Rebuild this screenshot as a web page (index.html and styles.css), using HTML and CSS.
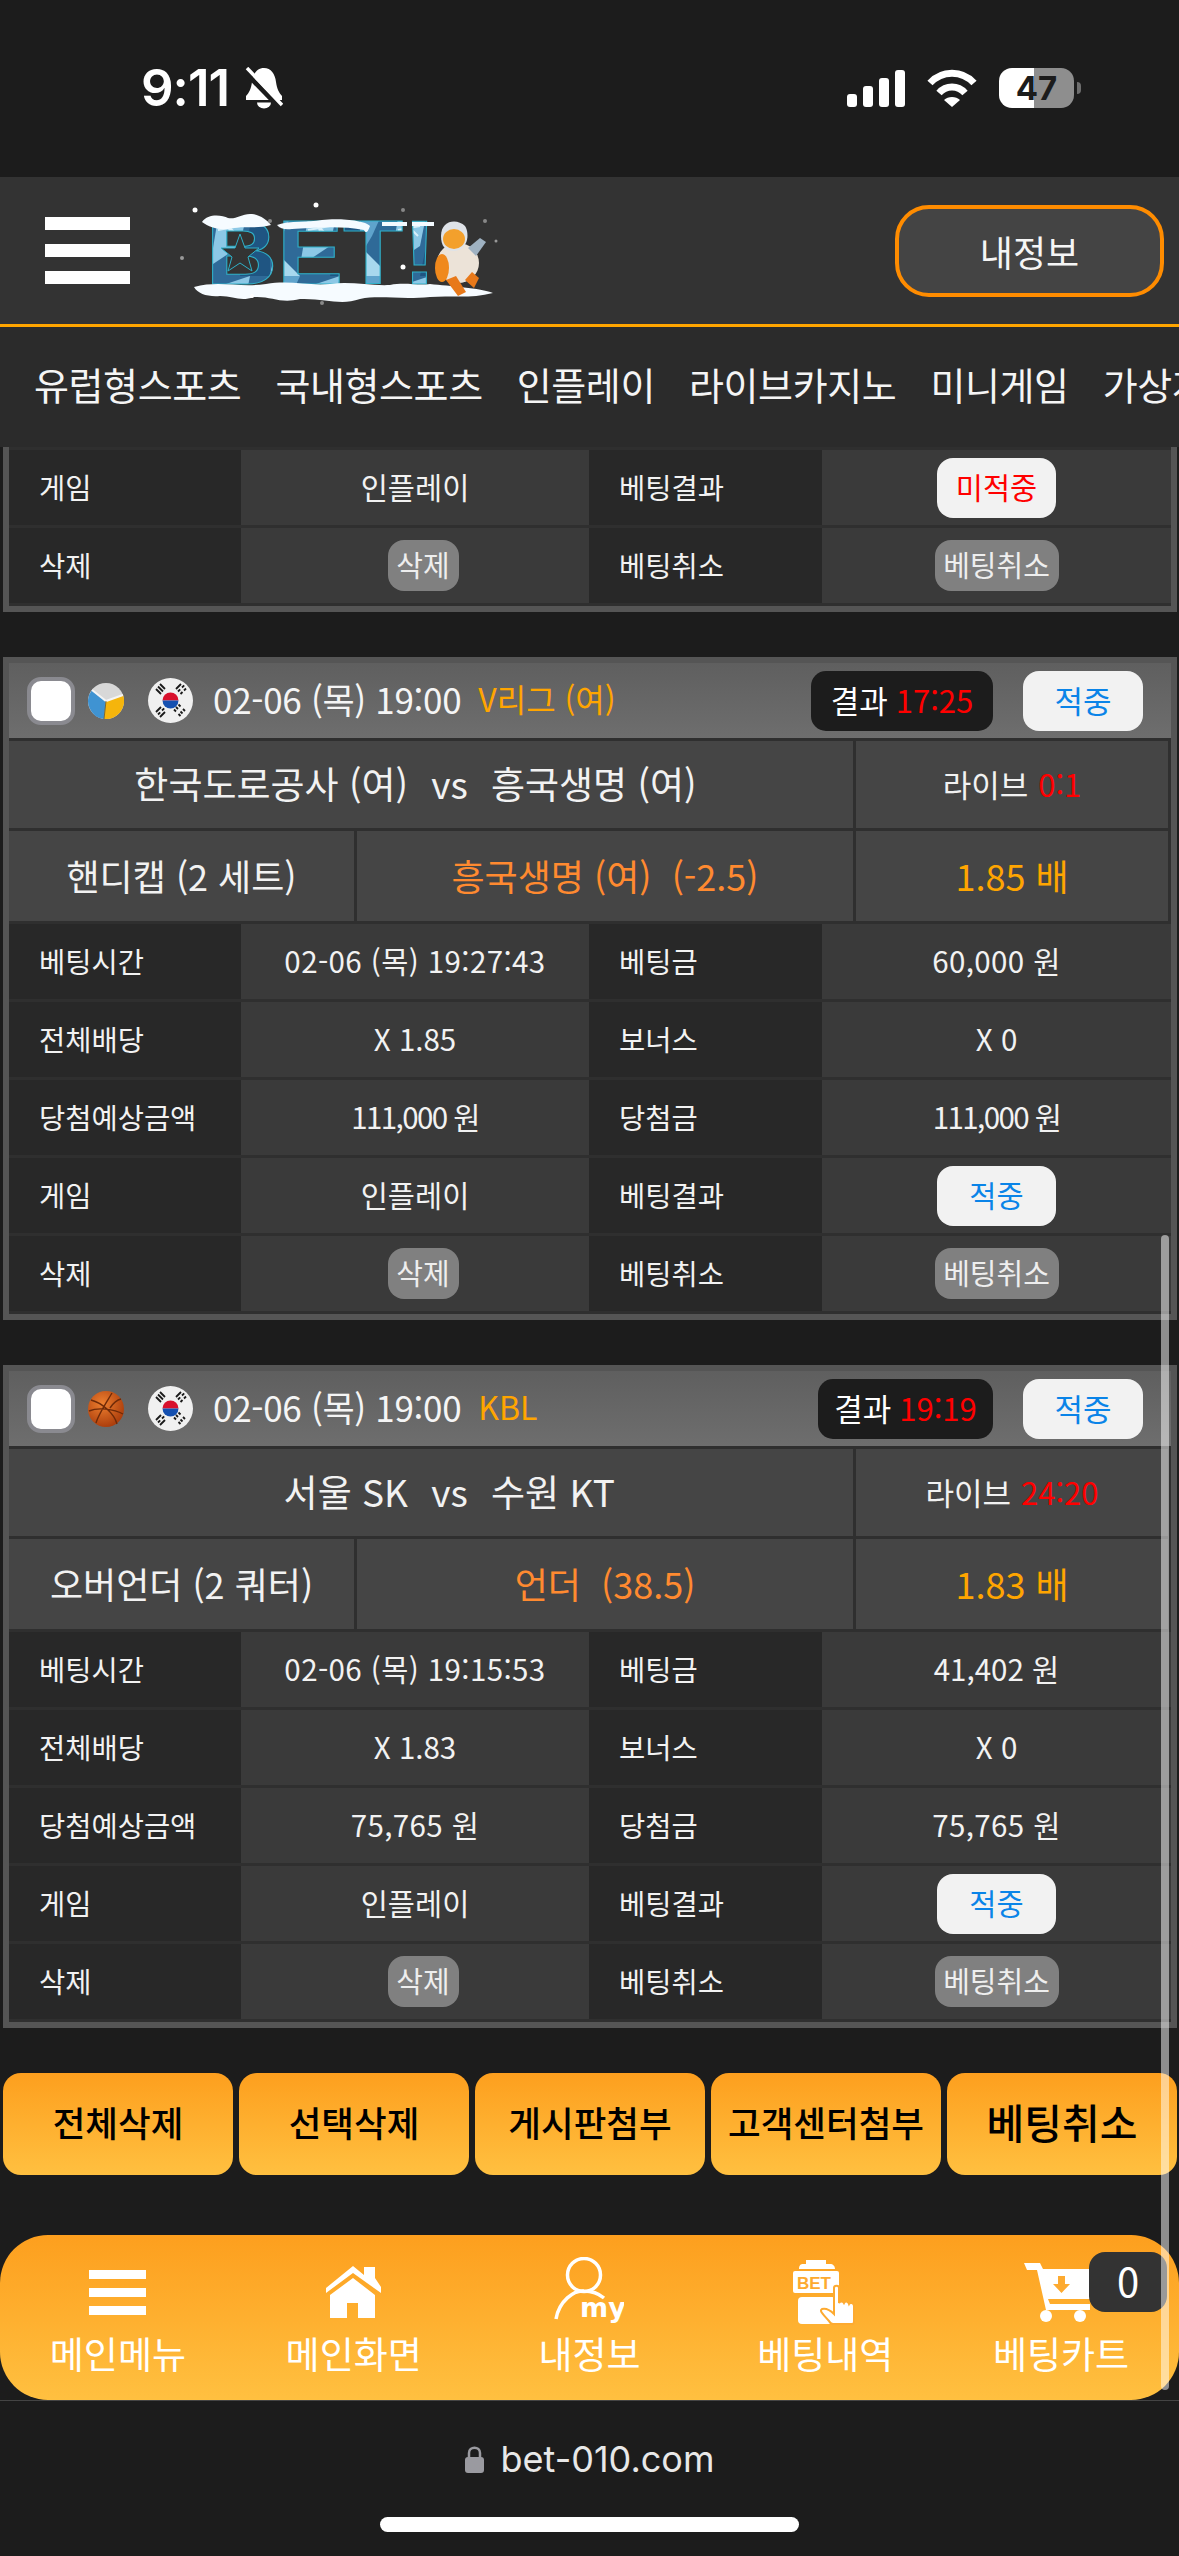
FILE: index.html
```html
<!DOCTYPE html>
<html lang="ko">
<head>
<meta charset="utf-8">
<title>BET</title>
<link rel="stylesheet" href="styles.css">
</head>
<body>
<svg class="defs" width="0" height="0" aria-hidden="true">
  <defs>
    <symbol id="flag" viewBox="0 0 45 45">
      <circle cx="22.5" cy="22.5" r="22.5" fill="#f0f0f0"/>
      <path d="M14.5 22.5a8 8 0 0 1 16 0z" fill="#d8102c"/>
      <path d="M14.5 22.5a8 8 0 0 0 16 0z" fill="#1550b0"/>
      <g stroke="#1a1a1a" stroke-width="1.8" fill="none">
        <path d="M8 11l5 5M10 8.500l5 5M12 6l5 5"/>
        <path d="M28 11l5-5M30 13.500l2.200-2.200M34 9.500l2.200-2.200M32.500 16l2-2M36 12.500l2-2"/>
        <path d="M8 34l5-5M10 36.500l2.200-2.200M14 32.500l2.200-2.200M12 39l5-5"/>
        <path d="M28 29l2 2M32.500 33.500l2 2M30.500 26.500l2 2M35 31l2 2M26 31.500l2 2M30.500 36l2 2"/>
      </g>
    </symbol>
    <symbol id="volley" viewBox="0 0 36 36">
      <circle cx="18" cy="18" r="18" fill="#d8d8d8"/>
      <path d="M18 18L16 36A18 18 0 0 0 35 12z" fill="#f5b50c"/>
      <path d="M18 18L16 36A18 18 0 0 1 4 7z" fill="#3f93d2"/>
      <path d="M4 7L18 18 35 12" fill="none" stroke="#f4f4f4" stroke-width="2"/>
      <path d="M18 18L16 36" stroke="#7d6a30" stroke-width="1"/>
    </symbol>
    <radialGradient id="bballfill" cx="40%" cy="35%" r="70%">
      <stop offset="0" stop-color="#ee8030"/>
      <stop offset="1" stop-color="#a83a0a"/>
    </radialGradient>
    <symbol id="bball" viewBox="0 0 36 36">
      <circle cx="18" cy="18" r="18" fill="url(#bballfill)"/>
      <path d="M3 9C14 12 26 22 29 33M24 2C18 12 10 24 8 32M1 20C10 16 26 18 35 23M33 8C28 9 24 14 22 17" fill="none" stroke="#6e2a08" stroke-width="1.400"/>
    </symbol>
  </defs>
</svg>

<div class="screen">
  <div class="status">
    <div class="status-left">
      <span class="clock">9:11</span>
      <svg class="bell" width="39" height="42" viewBox="0 0 39 42">
        <path d="M20 1C27 1 31 7 32 15C33 22 35 26 38 29V33H2V29C5 26 7 22 8 15C9 7 13 1 20 1Z" fill="#fff"/>
        <path d="M13 35.500A7 6 0 0 0 27 35.500Z" fill="#fff"/>
        <path d="M1 5L35 40" stroke="#1c1c1c" stroke-width="5"/>
        <path d="M3 1L38 38" stroke="#fff" stroke-width="3.500"/>
      </svg>
    </div>
    <div class="status-right">
      <svg width="58" height="37" viewBox="0 0 58 37" fill="#fff">
        <rect x="0" y="24" width="10" height="13" rx="3"/>
        <rect x="16" y="16" width="10" height="21" rx="3"/>
        <rect x="32" y="8" width="10" height="29" rx="3"/>
        <rect x="48" y="0" width="10" height="37" rx="3"/>
      </svg>
      <svg width="50" height="38" viewBox="0 0 50 38">
        <path d="M3 14C15 1 35 1 47 14" fill="none" stroke="#fff" stroke-width="7"/>
        <path d="M12 24C19 16 31 16 38 24" fill="none" stroke="#fff" stroke-width="7"/>
        <path d="M25 38L17 31C21 27 29 27 33 31Z" fill="#fff"/>
      </svg>
      <span class="battery">47</span>
    </div>
  </div>

  <header class="topbar">
    <div class="burger"><i></i><i></i><i></i></div>
    <svg class="logo" width="320" height="110" viewBox="0 0 320 110">
      <defs>
        <pattern id="frost" width="90" height="80" patternUnits="userSpaceOnUse">
          <rect width="90" height="80" fill="#2f6a98"/>
          <path d="M0 0L30 0 12 40 0 60Z" fill="#5fa3cc"/>
          <path d="M40 10L70 0 60 50 30 70Z" fill="#8cc8e6"/>
          <path d="M70 30L90 20 90 80 60 80Z" fill="#1f5582"/>
          <path d="M5 55L30 80 0 80Z" fill="#a8d8ee"/>
          <path d="M46 20L52 44M38 34L60 30M42 24L58 40" stroke="#d8f0fa" stroke-width="2"/>
        </pattern>
      </defs>
      <text class="logo-text" x="26" y="88" textLength="230" lengthAdjust="spacingAndGlyphs" fill="url(#frost)" stroke="#2fb0c8" stroke-width="1">BET!</text>
      <path d="M60 38L65 52 79 52 68 61 72 75 60 67 48 75 52 61 41 52 55 52Z" fill="#333" stroke="#2fb0c8" stroke-width="1"/>
      <path d="M22 26C28 17 42 19 48 22C56 24 62 17 72 18C80 19 87 24 91 29C78 33 64 30 52 32C42 35 30 32 22 26Z" fill="#f6fbff"/>
      <path d="M97 29C110 24 128 27 142 24C158 22 185 24 190 30C188 36 186 38 184 34C160 29 130 32 112 33C106 34 100 33 97 29Z" fill="#f4faff"/>
      <path d="M202 26H227V30H202ZM232 26H254V30H232Z" fill="#f4faff"/>
      <path d="M14 91C40 84 58 92 86 88C110 84 128 90 150 88C170 85 190 90 210 89C226 86 238 90 250 88C270 90 300 92 313 97C290 103 270 99 250 101C220 104 200 99 180 103C160 110 145 102 120 103C100 108 92 100 74 101C60 106 54 100 40 100C28 101 18 98 14 91Z" fill="#f6fbff"/>
      <ellipse cx="278" cy="67" rx="21" ry="20" fill="#ece3d8"/>
      <ellipse cx="262" cy="72" rx="7" ry="14" fill="#f0891c"/>
      <path d="M266 84L278 100 286 96 276 80Z" fill="#e8791a"/>
      <path d="M285 84L294 92 299 82 292 76Z" fill="#e8791a"/>
      <path d="M261 40C261 24 277 22 285 30C290 38 288 54 274 55C265 55 261 50 261 40Z" fill="#dfe3e8"/>
      <ellipse cx="274" cy="43" rx="11" ry="10" fill="#f3a02c"/>
      <path d="M288 52L300 42 306 46 296 60Z" fill="#9fb2c2"/>
      <circle cx="15" cy="14" r="2.500" fill="#fff"/>
      <circle cx="136" cy="9" r="2.500" fill="#fff"/>
      <circle cx="223" cy="71" r="2.500" fill="#fff"/>
      <circle cx="72" cy="100" r="2" fill="#fff"/>
      <circle cx="2" cy="62" r="2" fill="#999"/>
      <circle cx="223" cy="14" r="2" fill="#888"/>
      <circle cx="305" cy="25" r="2" fill="#888"/>
      <circle cx="316" cy="45" r="1.500" fill="#999"/>
      <circle cx="142" cy="107" r="2" fill="#888"/>
      <circle cx="90" cy="25" r="2" fill="#888"/>
    </svg>
    <button class="myinfo">내정보</button>
  </header>

  <nav class="gnb">
    <span>유럽형스포츠</span><span>국내형스포츠</span><span>인플레이</span><span>라이브카지노</span><span>미니게임</span><span>가상게임</span>
  </nav>

  <main class="list">
    <section class="card card-tail">
      <div class="data">
        <div class="k">게임</div><div class="v">인플레이</div><div class="k">베팅결과</div><div class="v"><span class="result lose">미적중</span></div>
        <div class="k">삭제</div><div class="v"><span class="mini mini-del">삭제</span></div><div class="k">베팅취소</div><div class="v"><span class="mini">베팅취소</span></div>
      </div>
    </section>

    <section class="card">
      <div class="card-head">
        <span class="check"></span>
        <svg class="ball" width="36" height="36"><use href="#volley"/></svg>
        <svg class="flag" width="45" height="45"><use href="#flag"/></svg>
        <span class="date">02-06 (목) 19:00</span>
        <span class="league">V리그 (여)</span>
        <span class="score">결과 <b>17:25</b></span>
        <span class="badge-win">적중</span>
      </div>
      <div class="match">
        <div class="teams"><span class="home">한국도로공사 (여)</span><span class="vs">vs</span><span>흥국생명 (여)</span></div>
        <div class="live">라이브 <b>0:1</b></div>
      </div>
      <div class="pick">
        <div class="market">핸디캡 (2 세트)</div>
        <div class="choice">흥국생명 (여) &nbsp;(-2.5)</div>
        <div class="odds">1.85 배</div>
      </div>
      <div class="data">
        <div class="k">베팅시간</div><div class="v wide">02-06 (목) 19:27:43</div><div class="k">베팅금</div><div class="v wide">60,000 원</div>
        <div class="k">전체배당</div><div class="v">X 1.85</div><div class="k">보너스</div><div class="v">X 0</div>
        <div class="k">당첨예상금액</div><div class="v tight">111,000 원</div><div class="k">당첨금</div><div class="v tight">111,000 원</div>
        <div class="k">게임</div><div class="v">인플레이</div><div class="k">베팅결과</div><div class="v"><span class="result win">적중</span></div>
        <div class="k">삭제</div><div class="v"><span class="mini mini-del">삭제</span></div><div class="k">베팅취소</div><div class="v"><span class="mini">베팅취소</span></div>
      </div>
    </section>

    <section class="card">
      <div class="card-head">
        <span class="check"></span>
        <svg class="ball" width="36" height="36"><use href="#bball"/></svg>
        <svg class="flag" width="45" height="45"><use href="#flag"/></svg>
        <span class="date">02-06 (목) 19:00</span>
        <span class="league">KBL</span>
        <span class="score narrow">결과 <b>19:19</b></span>
        <span class="badge-win">적중</span>
      </div>
      <div class="match">
        <div class="teams"><span class="home">서울 SK</span><span class="vs">vs</span><span>수원 KT</span></div>
        <div class="live">라이브 <b>24:20</b></div>
      </div>
      <div class="pick">
        <div class="market">오버언더 (2 쿼터)</div>
        <div class="choice">언더 &nbsp;(38.5)</div>
        <div class="odds">1.83 배</div>
      </div>
      <div class="data">
        <div class="k">베팅시간</div><div class="v wide">02-06 (목) 19:15:53</div><div class="k">베팅금</div><div class="v">41,402 원</div>
        <div class="k">전체배당</div><div class="v">X 1.83</div><div class="k">보너스</div><div class="v">X 0</div>
        <div class="k">당첨예상금액</div><div class="v wide">75,765 원</div><div class="k">당첨금</div><div class="v wide">75,765 원</div>
        <div class="k">게임</div><div class="v">인플레이</div><div class="k">베팅결과</div><div class="v"><span class="result win">적중</span></div>
        <div class="k">삭제</div><div class="v"><span class="mini mini-del">삭제</span></div><div class="k">베팅취소</div><div class="v"><span class="mini">베팅취소</span></div>
      </div>
    </section>

    <div class="actions">
      <button class="act">전체삭제</button>
      <button class="act">선택삭제</button>
      <button class="act">게시판첨부</button>
      <button class="act">고객센터첨부</button>
      <button class="act act-big">베팅취소</button>
    </div>
  </main>

  <nav class="tabbar">
    <div class="tab">
      <span class="tab-icon"><span class="tab-burger"><i></i><i></i><i></i></span></span>
      <span>메인메뉴</span>
    </div>
    <div class="tab">
      <span class="tab-icon">
        <svg width="57" height="52" viewBox="0 0 57 52" fill="#fff">
          <path d="M39 1H50V12L56 21V27L28 7 1 27V22L28 0 39 9Z"/>
          <path d="M28 12L50 29V52H33V37H22V52H5V29Z"/>
        </svg>
      </span>
      <span>메인화면</span>
    </div>
    <div class="tab">
      <span class="tab-icon">
        <svg width="70" height="70" viewBox="0 0 70 70">
          <circle cx="30" cy="18" r="16.500" fill="none" stroke="#fff" stroke-width="3.500"/>
          <path d="M2 62C5 44 20 33 30 34C37 34 44 36 50 41" fill="none" stroke="#fff" stroke-width="3.500"/>
          <text class="icon-my" x="26" y="60">my</text>
        </svg>
      </span>
      <span>내정보</span>
    </div>
    <div class="tab">
      <span class="tab-icon">
        <svg width="64" height="66" viewBox="0 0 64 66">
          <path d="M6 10C6 6 8 5 10 5H13V1H33V5H37C40 5 42 7 42 10Z" fill="#fff"/>
          <rect x="0" y="12" width="46" height="22" rx="2" fill="#fff"/>
          <text class="icon-bet" x="4" y="30">BET</text>
          <rect x="5" y="38" width="38" height="27" rx="4" fill="#fff"/>
          <path d="M36 62C30 55 26 52 29 50C33 49 38 52 41 55V29C41 26 46 26 46 29V44C47 42 50 42 51 44C52 42 55 42 56 45C57 43 61 44 61 47V62C61 65 60 65 58 65H40C38 65 37 64 36 62Z" fill="#fff" stroke="#fdaa30" stroke-width="2"/>
        </svg>
      </span>
      <span>베팅내역</span>
    </div>
    <div class="tab">
      <span class="tab-icon">
        <svg class="cart" width="80" height="62" viewBox="0 0 80 62" fill="#fff">
          <path d="M0 2H16L19 8H78V38H24L26 43H66V49H22L13 9H3Z"/>
          <circle cx="22" cy="55" r="6"/>
          <circle cx="56" cy="55" r="6"/>
          <path d="M34 15H41V23H46L37.500 32 29 23H34Z" fill="#fdaa30"/>
        </svg>
      </span>
      <span>베팅카트</span>
    </div>
    <div class="cart-count">0</div>
  </nav>

  <footer class="urlbar">
    <div class="url">
      <svg width="19" height="27" viewBox="0 0 19 27">
        <path d="M4 12V7C4 0 15 0 15 7V12" fill="none" stroke="#9a9aa0" stroke-width="2.500"/>
        <rect x="0" y="11" width="19" height="16" rx="3" fill="#9a9aa0"/>
      </svg>
      <span>bet-010.com</span>
    </div>
    <div class="home-bar"></div>
  </footer>

  <div class="scrollthumb"></div>
</div>
</body>
</html>
```

FILE: styles.css
```css
* { box-sizing: border-box; }

html, body {
  margin: 0;
  padding: 0;
  background: #1c1c1c;
}

body {
  font-family: "Noto Sans CJK KR", "Noto Sans", sans-serif;
  color: #f2f2f2;
}

.defs { position: absolute; }

button {
  font-family: inherit;
  border: 0;
  padding: 0;
}

.screen {
  position: relative;
  width: 1179px;
  height: 2556px;
  display: flex;
  flex-direction: column;
  overflow: hidden;
}

/* status bar */
.status {
  flex: 0 0 177px;
  display: flex;
  justify-content: space-between;
  align-items: flex-start;
  padding: 66px 105px 0 141px;
  background: #1c1c1c;
}

.status-left {
  display: flex;
  align-items: center;
  gap: 15px;
}

.clock {
  font-family: Inter, sans-serif;
  font-weight: 600;
  font-size: 51px;
  line-height: 44px;
  letter-spacing: -1px;
  color: #fff;
}

.status-right {
  display: flex;
  align-items: center;
  gap: 22px;
  padding-top: 2px;
}

.battery {
  position: relative;
  width: 75px;
  height: 40px;
  border-radius: 13px;
  background: linear-gradient(90deg, #fff 47%, #8e8e8e 47%);
  color: #1c1c1c;
  font-family: Inter, sans-serif;
  font-weight: 700;
  font-size: 33px;
  line-height: 40px;
  text-align: center;
}

.battery::after {
  content: "";
  position: absolute;
  left: 78px;
  top: 14px;
  width: 4px;
  height: 12px;
  border-radius: 0 6px 6px 0;
  background: #6e6e6e;
}

/* top header */
.topbar {
  flex: 0 0 150px;
  display: flex;
  align-items: center;
  padding: 0 15px 0 45px;
  background: #333;
  border-bottom: 3px solid #ffa500;
}

.burger {
  display: flex;
  flex-direction: column;
  gap: 14px;
  width: 85px;
}

.burger i {
  display: block;
  height: 13px;
  background: #fff;
}

.logo {
  margin-left: 50px;
  margin-top: 1px;
}

.logo-text {
  font-family: "Liberation Sans", sans-serif;
  font-weight: 700;
  font-size: 91px;
}

.myinfo {
  margin-left: auto;
  width: 269px;
  height: 92px;
  border: 4px solid #ff8c00;
  border-radius: 34px;
  background: #444;
  color: #f5f5f5;
  font-size: 36px;
}

/* category strip */
.gnb {
  flex: 0 0 120px;
  display: flex;
  align-items: center;
  gap: 34px;
  padding: 0 0 8px 34px;
  background: #2b2b2b;
  font-size: 38px;
  letter-spacing: -.4px;
  white-space: nowrap;
  overflow: hidden;
  color: #f5f5f5;
}

.gnb span { flex: none; }

/* bet list */
.list {
  flex: 0 0 1788px;
  display: flex;
  flex-direction: column;
  gap: 45px;
  overflow: hidden;
}

.card {
  flex: none;
  width: 1174px;
  margin-left: 3px;
  display: flex;
  flex-direction: column;
  gap: 3px;
  padding-bottom: 3px;
  border: 6px solid #555;
  background: #2f2f2f;
}

.card-tail {
  border-top: 0;
  padding-top: 3px;
}

.card-head {
  height: 75px;
  display: flex;
  align-items: center;
  padding: 0 28px 0 18px;
  background: linear-gradient(#5f5f5f, #6e6e6e);
  font-size: 31px;
  white-space: nowrap;
}

.check {
  flex: none;
  width: 48px;
  height: 48px;
  border: 4px solid #8a8a90;
  border-radius: 14px;
  background: #fff;
}

.ball { margin-left: 13px; }
.flag { margin-left: 24px; }

.date {
  margin-left: 20px;
  padding-bottom: 5px;
  font-size: 35px;
  letter-spacing: -.3px;
  color: #f5f5f5;
}

.league {
  margin-left: 17px;
  padding-bottom: 5px;
  font-size: 32px;
  color: #ffa500;
}

.score {
  margin-left: auto;
  width: 182px;
  height: 60px;
  display: flex;
  align-items: center;
  justify-content: center;
  gap: 8px;
  padding-bottom: 3px;
  border-radius: 15px;
  background: #1c1c1c;
  color: #fff;
}

.score.narrow { width: 175px; }

.score b {
  font-weight: 400;
  color: #f00;
}

.badge-win {
  flex: none;
  width: 120px;
  height: 60px;
  margin-left: 30px;
  display: flex;
  align-items: center;
  justify-content: center;
  padding-bottom: 3px;
  border-radius: 16px;
  background: #f2f2f2;
  color: #0a84e8;
}

.match,
.pick {
  display: grid;
  gap: 3px;
  padding-right: 3px;
  white-space: nowrap;
}

.match {
  height: 87px;
  grid-template-columns: 844px 1fr;
}

.pick {
  height: 90px;
  grid-template-columns: 345px 496px 1fr;
}

.match > div,
.pick > div {
  display: flex;
  align-items: center;
  justify-content: center;
  padding-bottom: 3px;
  background: #454545;
}

.match > .teams {
  display: grid;
  grid-template-columns: 399px 83px 1fr;
  font-size: 37px;
}

.home { text-align: right; }
.vs { text-align: center; }

.live {
  gap: 10px;
  font-size: 31px;
}

.live b {
  font-weight: 400;
  color: #f00;
}

.market { font-size: 36px; }

.choice {
  font-size: 36px;
  color: #ff8a30;
}

.odds {
  font-size: 36px;
  color: #ffa500;
}

.data {
  display: grid;
  grid-template-columns: 232px 348px 233px 1fr;
  grid-auto-rows: 75px;
  row-gap: 3px;
  font-size: 28.5px;
  white-space: nowrap;
}

.k {
  display: flex;
  align-items: center;
  padding: 0 0 3px 30px;
  background: #282828;
}

.v {
  display: flex;
  align-items: center;
  justify-content: center;
  padding-bottom: 3px;
  background: #3a3a3a;
  font-size: 29.5px;
}

.v.wide { letter-spacing: .4px; }
.v.tight { letter-spacing: -1.6px; }

.result {
  display: flex;
  align-items: center;
  justify-content: center;
  width: 119px;
  height: 60px;
  margin-top: 3px;
  padding-bottom: 3px;
  border-radius: 16px;
  background: #f2f2f2;
}

.lose { color: #f00; }
.win { color: #0a84e8; }

.mini {
  width: 124px;
  height: 51px;
  margin-top: 3px;
  display: flex;
  align-items: center;
  justify-content: center;
  padding-bottom: 3px;
  border-radius: 16px;
  background: #808080;
  color: #eee;
  font-size: 29px;
}

.mini-del {
  width: 71px;
  margin-left: 16px;
}

/* action buttons */
.actions {
  display: flex;
  gap: 6px;
  padding-left: 3px;
}

.act {
  flex: none;
  width: 230px;
  height: 102px;
  border-radius: 18px;
  background: linear-gradient(#fd9f1e, #ffc040);
  color: #000;
  font-size: 35.5px;
  font-weight: 500;
  padding-bottom: 6px;
}

.act-big { font-size: 41px; }

/* tab bar */
.tabbar {
  position: relative;
  flex: 0 0 165px;
  display: grid;
  grid-template-columns: repeat(5, 1fr);
  margin-top: 0;
  border-radius: 48px;
  background: linear-gradient(#fd9f1e, #ffc040);
  color: #fff;
  font-size: 37px;
}

.tab {
  display: flex;
  flex-direction: column;
  align-items: center;
  padding-top: 20px;
  line-height: 48px;
  white-space: nowrap;
}

.tab-icon {
  height: 74px;
  display: flex;
  align-items: center;
  justify-content: center;
}

.tab-burger {
  display: flex;
  flex-direction: column;
  gap: 9px;
  width: 57px;
}

.tab-burger i {
  display: block;
  height: 9px;
  background: #fff;
}

.cart { margin-left: 6px; }

.icon-my {
  font-family: "DejaVu Sans", sans-serif;
  font-weight: 700;
  font-size: 27px;
  fill: #fff;
}

.icon-bet {
  font-family: "Liberation Sans", sans-serif;
  font-weight: 700;
  font-size: 17px;
  fill: #fdaa30;
}

.cart-count {
  position: absolute;
  left: 1089px;
  top: 17px;
  width: 78px;
  height: 60px;
  border-radius: 16px;
  background: #333;
  color: #fff;
  font-size: 40px;
  line-height: 56px;
  text-align: center;
}

/* browser chrome */
.urlbar {
  flex: 1;
  display: flex;
  flex-direction: column;
  align-items: center;
  border-top: 1px solid #444;
  background: #1c1c1c;
}

.url {
  display: flex;
  align-items: center;
  gap: 17px;
  margin-top: 36px;
  font-family: Inter, sans-serif;
  font-size: 36px;
  line-height: 44px;
  color: #e8e8e8;
}

.home-bar {
  width: 419px;
  height: 15px;
  margin-top: 36px;
  border-radius: 8px;
  background: #fff;
}

.scrollthumb {
  position: absolute;
  left: 1161px;
  top: 1235px;
  width: 8px;
  height: 1155px;
  border-radius: 4px;
  background: rgba(255, 255, 255, .5);
}
```
